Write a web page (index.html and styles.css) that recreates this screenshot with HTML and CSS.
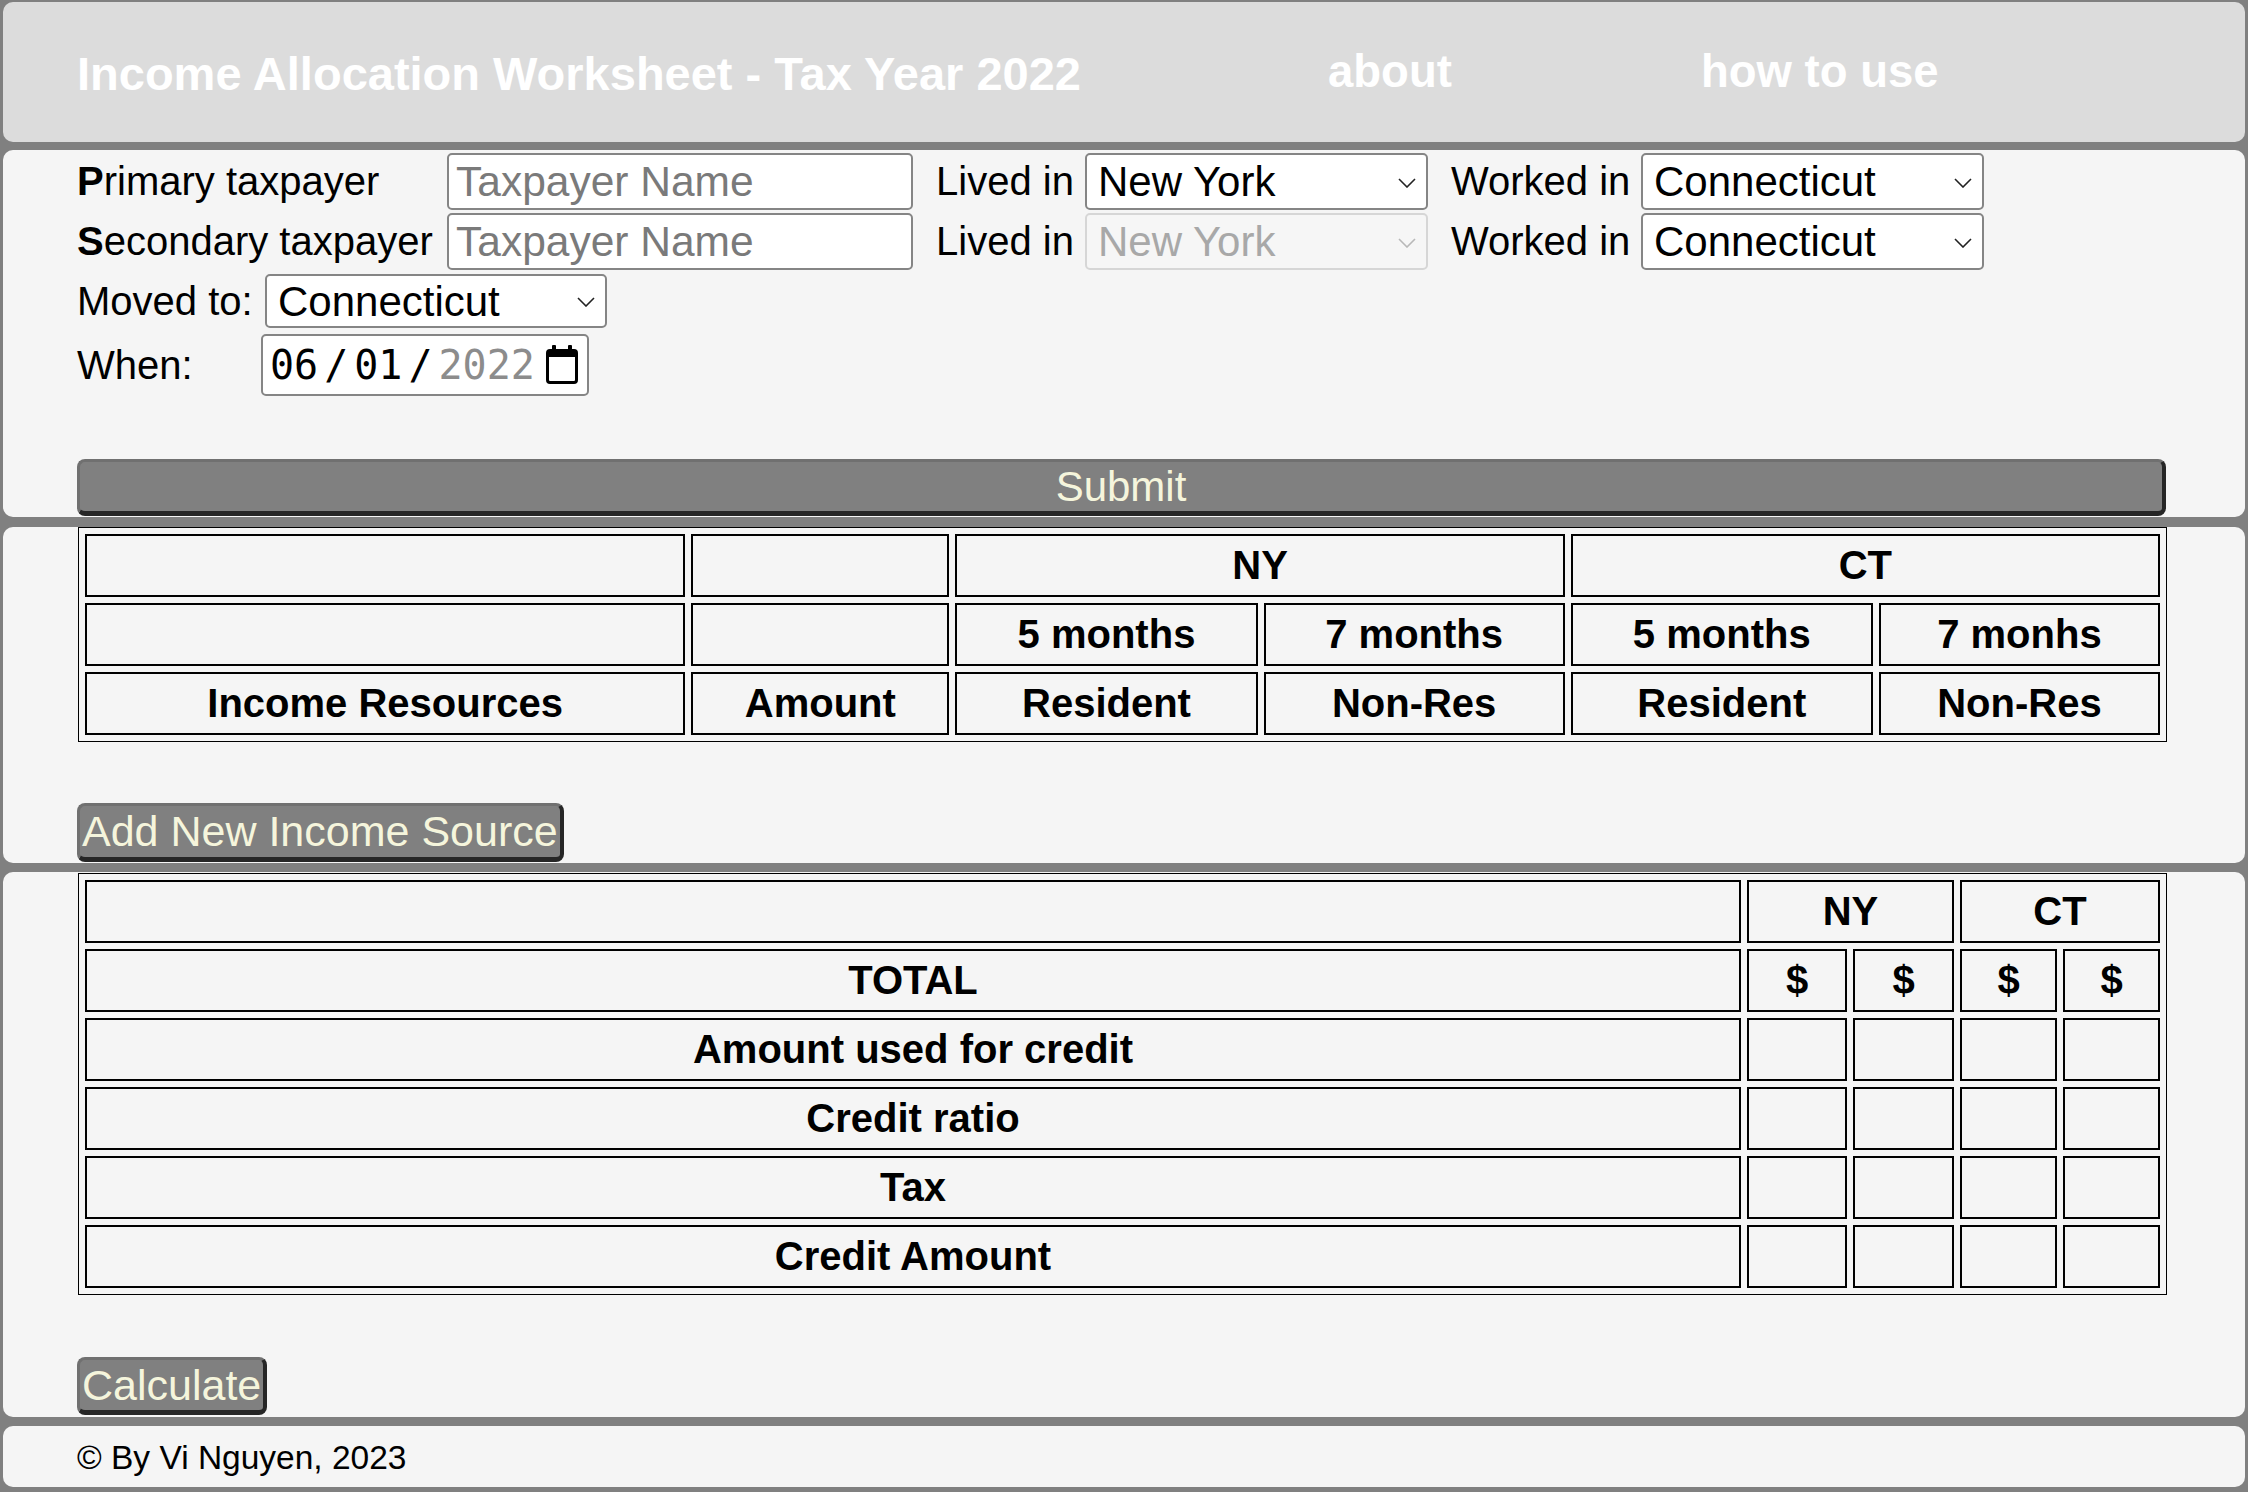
FILE: index.html
```html
<!DOCTYPE html>
<html lang="en">
<head>
<meta charset="utf-8">
<title>Income Allocation Worksheet - Tax Year 2022</title>
<link rel="stylesheet" href="styles.css">
</head>
<body>
<div class="page">
  <header class="hdr">
    <h1 class="title">Income Allocation Worksheet - Tax Year 2022</h1>
    <nav class="nav">
      <a class="nav-link nav-about" href="#about">about</a>
      <a class="nav-link" href="#howto">how to use</a>
    </nav>
  </header>

  <section class="panel form-panel">
    <div class="frow frow-1">
      <span class="who"><b>P</b>rimary taxpayer</span>
      <input class="name-input" type="text" placeholder="Taxpayer Name">
      <span class="lbl lbl-lived">Lived in</span>
      <span class="sel-wrap">
        <select class="sel"><option>New York</option></select>
        <svg class="chev" viewBox="0 0 18 10" width="18" height="10"><polyline points="1,1 9,9 17,1"/></svg>
      </span>
      <span class="lbl lbl-worked">Worked in</span>
      <span class="sel-wrap">
        <select class="sel"><option>Connecticut</option></select>
        <svg class="chev" viewBox="0 0 18 10" width="18" height="10"><polyline points="1,1 9,9 17,1"/></svg>
      </span>
    </div>
    <div class="frow frow-2">
      <span class="who"><b>S</b>econdary taxpayer</span>
      <input class="name-input" type="text" placeholder="Taxpayer Name">
      <span class="lbl lbl-lived">Lived in</span>
      <span class="sel-wrap">
        <select class="sel" disabled><option>New York</option></select>
        <svg class="chev chev-dis" viewBox="0 0 18 10" width="18" height="10"><polyline points="1,1 9,9 17,1"/></svg>
      </span>
      <span class="lbl lbl-worked">Worked in</span>
      <span class="sel-wrap">
        <select class="sel"><option>Connecticut</option></select>
        <svg class="chev" viewBox="0 0 18 10" width="18" height="10"><polyline points="1,1 9,9 17,1"/></svg>
      </span>
    </div>
    <div class="frow frow-3">
      <span class="lbl-moved">Moved to:</span>
      <span class="sel-wrap">
        <select class="sel sel-moved"><option>Connecticut</option></select>
        <svg class="chev" viewBox="0 0 18 10" width="18" height="10"><polyline points="1,1 9,9 17,1"/></svg>
      </span>
    </div>
    <div class="frow frow-4">
      <span class="lbl-when">When:</span>
      <div class="date-box">
        <span class="dseg">06</span><span class="dsl">/</span><span class="dseg">01</span><span class="dsl">/</span><span class="dseg dyear">2022</span>
        <svg class="cal" viewBox="0 0 34 40" width="34" height="40">
          <rect x="7" y="0" width="4" height="7" rx="1"/>
          <rect x="23" y="0" width="4" height="7" rx="1"/>
          <rect class="cal-body" x="2.5" y="5.5" width="29" height="32" rx="2.5"/>
          <rect x="2" y="5" width="30" height="7"/>
        </svg>
      </div>
    </div>
    <button class="btn btn-submit" type="button">Submit</button>
  </section>

  <section class="panel table-panel">
    <table class="grid grid-income">
      <tr>
        <td class="c-src"></td><td class="c-amt"></td>
        <td colspan="2">NY</td><td colspan="2">CT</td>
      </tr>
      <tr>
        <td class="c-src"></td><td class="c-amt"></td>
        <td class="c-a">5 months</td><td class="c-b">7 months</td><td class="c-c">5 months</td><td class="c-d">7 monhs</td>
      </tr>
      <tr>
        <td class="c-src">Income Resources</td><td class="c-amt">Amount</td>
        <td class="c-a">Resident</td><td class="c-b">Non-Res</td><td class="c-c">Resident</td><td class="c-d">Non-Res</td>
      </tr>
    </table>
    <button class="btn btn-add" type="button">Add New Income Source</button>
  </section>

  <section class="panel totals-panel">
    <table class="grid grid-totals">
      <tr>
        <td class="t-label"></td>
        <td colspan="2">NY</td><td colspan="2">CT</td>
      </tr>
      <tr>
        <td class="t-label">TOTAL</td>
        <td class="t-a">$</td><td class="t-b">$</td><td class="t-c">$</td><td class="t-d">$</td>
      </tr>
      <tr>
        <td class="t-label">Amount used for credit</td>
        <td class="t-a"></td><td class="t-b"></td><td class="t-c"></td><td class="t-d"></td>
      </tr>
      <tr>
        <td class="t-label">Credit ratio</td>
        <td class="t-a"></td><td class="t-b"></td><td class="t-c"></td><td class="t-d"></td>
      </tr>
      <tr>
        <td class="t-label">Tax</td>
        <td class="t-a"></td><td class="t-b"></td><td class="t-c"></td><td class="t-d"></td>
      </tr>
      <tr>
        <td class="t-label">Credit Amount</td>
        <td class="t-a"></td><td class="t-b"></td><td class="t-c"></td><td class="t-d"></td>
      </tr>
    </table>
    <button class="btn btn-calc" type="button">Calculate</button>
  </section>

  <footer class="panel foot">© By Vi Nguyen, 2023</footer>
</div>
</body>
</html>
```

FILE: styles.css
```css
* { box-sizing: border-box; }

html, body {
  margin: 0;
  padding: 0;
  background: #808080;
}

body {
  font-family: "Liberation Sans", Arial, Helvetica, sans-serif;
  color: #000;
}

.page {
  padding: 2px 3px 5px 3px;
  display: flex;
  flex-direction: column;
}

/* header */
.hdr {
  height: 140px;
  background: #dcdcdc;
  border-radius: 10px;
  display: flex;
  align-items: center;
  padding-left: 74px;
  margin-bottom: 8px;
}

.title {
  margin: 0;
  width: 1251px;
  flex: none;
  font-size: 47px;
  font-weight: bold;
  color: #fff;
  line-height: 1;
  padding-top: 2px;
  white-space: nowrap;
}

.nav {
  display: flex;
  font-size: 45.5px;
  font-weight: bold;
  line-height: 1;
}

.nav-link {
  color: #fff;
  text-decoration: none;
}

.nav-about {
  width: 373px;
}

/* generic panel */
.panel {
  background: #f5f5f5;
  border-radius: 10px;
  padding-left: 74px;
}

/* form */
.form-panel {
  height: 367px;
  padding-top: 3px;
  margin-bottom: 10px;
  font-size: 40px;
}

.frow {
  display: flex;
  align-items: center;
}

.frow-1, .frow-2 {
  height: 57px;
}

.frow-2 {
  margin-top: 3px;
}

.frow-3 {
  height: 54px;
  margin-top: 4px;
}

.frow-4 {
  height: 62px;
  margin-top: 6px;
}

.who {
  width: 370px;
  flex: none;
}

.name-input {
  width: 466px;
  height: 57px;
  flex: none;
  font-family: inherit;
  font-size: 42.5px;
  padding: 0 7px;
  border: 2px solid #858585;
  border-radius: 5px;
  background: #fff;
  color: #000;
}

.name-input::placeholder {
  color: #7a7a7a;
}

.lbl {
  flex: none;
  white-space: nowrap;
}

.lbl-lived {
  width: 149px;
  margin-left: 23px;
}

.lbl-worked {
  width: 190px;
  margin-left: 23px;
}

.sel-wrap {
  position: relative;
  display: inline-block;
  flex: none;
}

.sel {
  -webkit-appearance: none;
  appearance: none;
  width: 343px;
  height: 57px;
  font-family: inherit;
  font-size: 42px;
  padding: 0 40px 0 11px;
  border: 2px solid #858585;
  border-radius: 5px;
  background: #fff;
  color: #000;
  display: block;
}

.sel:disabled {
  background: #f6f6f6;
  border-color: #d6d6d6;
  color: #a8a8a8;
  opacity: 1;
}

.sel-moved {
  width: 342px;
  height: 54px;
}

.chev {
  position: absolute;
  right: 12px;
  top: 50%;
  margin-top: -4px;
  fill: none;
  stroke: #222;
  stroke-width: 1.6;
  pointer-events: none;
}

.chev-dis {
  stroke: #b8b8b8;
}

.lbl-moved {
  width: 188px;
  flex: none;
}

.lbl-when {
  width: 184px;
  flex: none;
}

.date-box {
  width: 328px;
  height: 62px;
  border: 2px solid #858585;
  border-radius: 5px;
  background: #fff;
  display: flex;
  align-items: center;
  padding-left: 7px;
  font-family: "DejaVu Sans Mono", "Liberation Mono", monospace;
  font-size: 40px;
  color: #000;
}

.dsl {
  margin: 0 6px;
}

.dyear {
  color: #8c8c8c;
}

.cal {
  margin-left: 10px;
  flex: none;
  fill: #000;
}

.cal-body {
  fill: none;
  stroke: #000;
  stroke-width: 3;
}

/* buttons */
.btn {
  font-family: inherit;
  background: #808080;
  color: #f5f5dc;
  border-style: solid;
  border-width: 3px 4px 5px 3px;
  border-color: #707070 #262626 #262626 #707070;
  border-radius: 8px;
  height: 57px;
  font-size: 43px;
  line-height: 1;
  padding: 0 2px;
  display: block;
}

.btn-submit {
  width: 2089px;
  margin-top: 63px;
  font-size: 42px;
}

.btn-add {
  margin-top: 61px;
  height: 59px;
}

.btn-calc {
  margin-top: 62px;
  height: 58px;
}

/* tables */
.table-panel {
  height: 336px;
  margin-bottom: 9px;
}

.totals-panel {
  height: 545px;
  margin-bottom: 9px;
  padding-top: 1px;
}

.grid {
  width: 2089px;
  border: 1px solid #000;
  border-spacing: 6px;
  margin-left: 1px;
}

.grid td {
  border: 2px solid #000;
  height: 63px;
  padding: 0;
  text-align: center;
  font-weight: bold;
  font-size: 40px;
  line-height: 59px;
  white-space: nowrap;
}

.c-src { width: 600px; }
.c-amt { width: 258px; }
.c-a { width: 302px; }
.c-b { width: 301px; }
.c-c { width: 302px; }
.c-d { width: 281px; }

.t-label { width: 1656px; }
.t-a { width: 100px; }
.t-b { width: 101px; }
.t-c { width: 97px; }
.t-d { width: 97px; }

/* footer */
.foot {
  height: 61px;
  font-size: 33.5px;
  padding-top: 13px;
  line-height: 38px;
}
```
